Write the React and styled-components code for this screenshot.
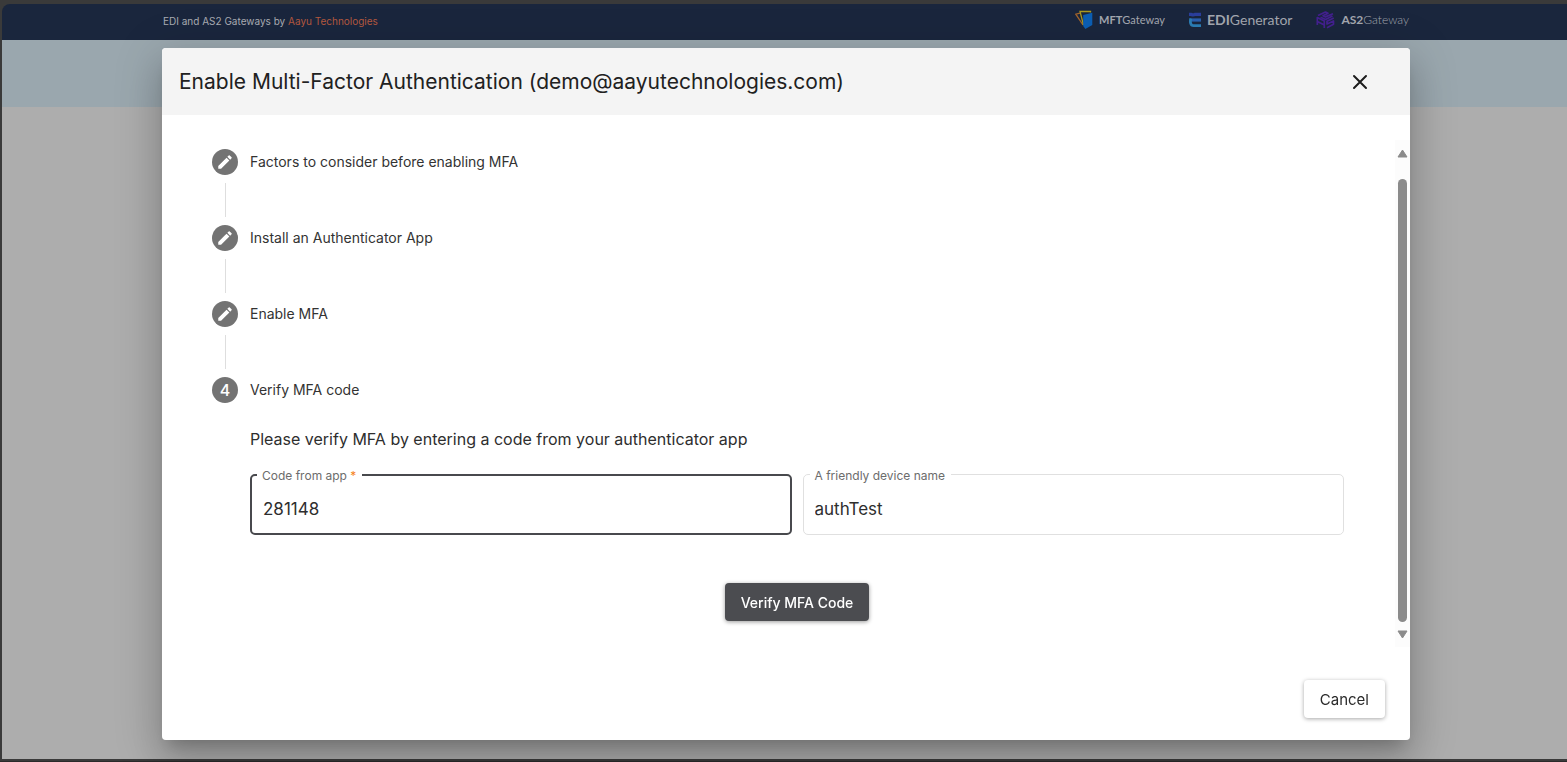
import React from 'react';
import styled, { createGlobalStyle, css } from 'styled-components';

const Global = createGlobalStyle`
  *, *::before, *::after { box-sizing: border-box; }
  html, body, #root { height: 100%; }
  body {
    margin: 0;
    background: #3a3a3a;
    font-family: Inter, "Liberation Sans", sans-serif;
    color: #2b2b2b;
  }
  button, input { font: inherit; color: inherit; }
  h1, h2, p, ol, fieldset { margin: 0; padding: 0; }
`;

const Page = styled.div`
  display: flex;
  flex-direction: column;
  min-height: 100%;
  padding: 4px 0 2px 2px;
  border-bottom: 1px solid #2a2a2a;
`;

const TopBar = styled.header`
  display: flex;
  align-items: center;
  justify-content: space-between;
  height: 36px;
  padding: 0 158px 2px 161px;
  border-top-left-radius: 8px;
  background: #1a263d;
`;

const Tagline = styled.p`
  font-size: 10px;
  line-height: 16px;
  color: #a9acb2;
`;

const BrandLink = styled.a`
  color: #b4583f;
  text-decoration: none;
`;

const Brands = styled.nav`
  display: flex;
  align-items: center;
  gap: 24px;
  padding-bottom: 2px;
`;

const Brand = styled.a`
  display: flex;
  align-items: center;
  gap: 6px;
  font-family: Lato, sans-serif;
  font-size: ${(p) => p.$size}px;
  line-height: 20px;
  color: #a3a7af;
  text-decoration: none;
  svg { display: block; }
  b { font-weight: 700; }
  span { font-weight: ${(p) => (p.$light ? 300 : 400)}; }
`;

const Banner = styled.div`
  height: 67px;
  background: #9aa7ae;
`;

const Canvas = styled.main`
  flex: 1;
  background: #adadad;
`;

const Overlay = styled.div`
  position: fixed;
  inset: 0;
  display: flex;
  padding: 48px 157px 22px 162px;
`;

const Shadow = styled.div`
  flex: 1;
  display: flex;
  min-width: 0;
  border-radius: 4px;
  box-shadow: 0 11px 15px -7px rgba(0, 0, 0, 0.2), 0 24px 38px 3px rgba(0, 0, 0, 0.14),
    0 9px 46px 8px rgba(0, 0, 0, 0.12);
`;

const Dialog = styled.section`
  flex: 1;
  min-width: 0;
  display: flex;
  flex-direction: column;
  overflow: hidden;
  border-radius: 4px;
  background: #fff;
`;

const DialogHeader = styled.header`
  display: flex;
  align-items: center;
  justify-content: space-between;
  height: 67px;
  padding: 0 39px 0 17px;
  background: #f4f4f4;
`;

const Title = styled.h1`
  font-size: 21px;
  line-height: 32px;
  font-weight: 400;
  color: #212121;
`;

const CloseButton = styled.button`
  display: grid;
  place-items: center;
  width: 22px;
  height: 24px;
  padding: 0;
  border: 0;
  background: none;
  color: #1c1c1c;
`;

const DialogBody = styled.div`
  flex: 1;
  min-height: 0;
  display: flex;
  margin-top: 25px;
`;

const Content = styled.div`
  flex: 1;
  min-width: 0;
  padding: 9px 51px 0 50px;
`;

const Steps = styled.ol`
  list-style: none;
`;

const Step = styled.li`
  display: flex;
  flex-direction: column;
`;

const StepHead = styled.div`
  display: flex;
  align-items: center;
  gap: 12px;
  height: 26px;
  font-size: 14px;
  line-height: 24px;
  color: #333;
`;

const Marker = styled.span`
  display: grid;
  place-items: center;
  flex: none;
  width: 26px;
  height: 26px;
  border-radius: 50%;
  background: #737373;
  color: #fff;
  font-size: 16px;
  font-weight: 500;
`;

const Connector = styled.div`
  width: 1px;
  height: 34px;
  margin: 8px 0 8px 13px;
  background: #dedede;
`;

const StepPanel = styled.form`
  display: flex;
  flex-direction: column;
  padding: 24px 0 0 38px;
`;

const Lead = styled.p`
  font-size: 16px;
  line-height: 24px;
  color: #2e2e2e;
`;

const Fields = styled.div`
  display: grid;
  grid-template-columns: 1fr 1fr;
  gap: 11px;
  margin-top: 13px;
`;

const Field = styled.fieldset`
  display: block;
  min-width: 0;
  height: 71px;
  border: 1px solid #e0e0e0;
  border-radius: 5px;
  ${(p) => p.$active && css`border: 2px solid #48494d;`}
`;

const Legend = styled.legend`
  margin-left: ${(p) => (p.$active ? 5 : 6)}px;
  padding: 3px 6px 0 5px;
  font-size: 12px;
  line-height: 18px;
  color: #6c6c6c;
  b { font-weight: 400; color: #f58220; }
`;

const Input = styled.input`
  display: block;
  width: 100%;
  height: 48px;
  padding: 0 11px;
  border: 0;
  outline: 0;
  background: none;
  font-size: 17px;
  color: #2e2e2e;
`;

const PrimaryButton = styled.button`
  align-self: center;
  height: 38px;
  margin-top: 48px;
  padding: 0 16px;
  border: 0;
  border-radius: 4px;
  background: #4b4c50;
  color: #fff;
  font-size: 14px;
  font-weight: 500;
  box-shadow: 0 1px 4px rgba(0, 0, 0, 0.4);
`;

const ScrollTrack = styled.div`
  display: flex;
  flex-direction: column;
  align-items: center;
  flex: none;
  width: 15px;
  padding: 9px 0 8px;
  background: #fcfcfc;
  svg { display: block; flex: none; }
`;

const ScrollThumb = styled.div`
  flex: 1;
  width: 9px;
  margin: 21px 0 8px;
  border-radius: 5px;
  background: #8b8b8b;
`;

const DialogFooter = styled.footer`
  display: flex;
  justify-content: flex-end;
  padding: 33px 25px 22px;
`;

const CancelButton = styled.button`
  height: 38px;
  padding: 0 16px;
  border: 0;
  border-radius: 4px;
  background: #fff;
  color: #2b2b2b;
  font-size: 15px;
  box-shadow: 0 1px 4px rgba(0, 0, 0, 0.35);
`;

const Pencil = () => (
  <svg width="18" height="18" viewBox="0 0 24 24" fill="currentColor" aria-hidden="true">
    <path d="M3 17.25V21h3.75L17.81 9.94l-3.75-3.75L3 17.25zM20.71 7.04a1 1 0 0 0 0-1.41l-2.34-2.34a1 1 0 0 0-1.41 0l-1.83 1.83 3.75 3.75 1.83-1.83z" />
  </svg>
);

const MftLogo = () => (
  <svg width="18" height="20" viewBox="0 0 18 20" fill="none" aria-hidden="true">
    <path d="M5 3.200.8 4.200 8 15" stroke="#a3642b" strokeWidth="1.3" />
    <path d="M15.500 2.500V1.500H5L8.500 15" stroke="#a99a22" strokeWidth="1.3" />
    <path d="M8.200 5 17.300 2.800V15L10.300 19 8.200 16z" fill="#0c5fb4" />
  </svg>
);

const EdiLogo = () => (
  <svg width="12" height="16" viewBox="0 0 12 16" fill="none" strokeWidth="3.200" aria-hidden="true">
    <path d="M0 2.300h1.500Q4 3.400 6 2.300h6" stroke="#2b3f9d" />
    <path d="M1 8H12" stroke="#2a5fae" />
    <path d="M1.800 6.500C.8 10 1.500 13.600 4.500 13.600H12" stroke="#2b7db4" strokeWidth="2.800" />
  </svg>
);

const As2Logo = () => (
  <svg width="19" height="18" viewBox="0 0 19 18" fill="none" stroke="#43208f" strokeWidth="1.700" strokeLinejoin="round" aria-hidden="true">
    <path d="M2 4.600 9.500 1l2.500 1.200-5 2.500 2.500 1.200L17 2.800M4.500 6.200 9.500 8.500l7-3.500" />
    <path d="M1.300 14V6.500l7 3.500v7M1.300 10.500l7 3.500" />
    <path d="M17.700 7 11 10.300v2.700l6.500-3v3.200L11 16.700" />
  </svg>
);

const CloseIcon = () => (
  <svg width="16" height="16" viewBox="0 0 16 16" stroke="currentColor" strokeWidth="2" strokeLinecap="round" aria-hidden="true">
    <path d="M2 2l12 12M14 2 2 14" />
  </svg>
);

const ArrowUp = () => (
  <svg width="11" height="9" viewBox="0 0 11 9" fill="#8b8b8b" stroke="#8b8b8b" strokeLinejoin="round">
    <path d="M5.500 1 10 8H1z" />
  </svg>
);

const ArrowDown = () => (
  <svg width="11" height="9" viewBox="0 0 11 9" fill="#8b8b8b" stroke="#8b8b8b" strokeLinejoin="round">
    <path d="M5.500 8 10 1H1z" />
  </svg>
);

const doneSteps = ['Factors to consider before enabling MFA', 'Install an Authenticator App', 'Enable MFA'];

export default function App() {
  return (
    <>
      <Global />
      <Page>
        <TopBar>
          <Tagline>
            EDI and AS2 Gateways by <BrandLink href="#aayu">Aayu Technologies</BrandLink>
          </Tagline>
          <Brands>
            <Brand href="#mft" $size={11}><MftLogo /><span><b>MFT</b>Gateway</span></Brand>
            <Brand href="#edi" $size={14}><EdiLogo /><span><b>EDI</b>Generator</span></Brand>
            <Brand href="#as2" $size={12} $light><As2Logo /><span><b>AS2</b>Gateway</span></Brand>
          </Brands>
        </TopBar>
        <Banner />
        <Canvas />
      </Page>
      <Overlay>
        <Shadow>
          <Dialog role="dialog" aria-labelledby="mfa-title">
            <DialogHeader>
              <Title id="mfa-title">Enable Multi-Factor Authentication (demo@aayutechnologies.com)</Title>
              <CloseButton type="button" aria-label="Close"><CloseIcon /></CloseButton>
            </DialogHeader>
            <DialogBody>
              <Content>
                <Steps>
                  {doneSteps.map((label) => (
                    <Step key={label}>
                      <StepHead><Marker><Pencil /></Marker>{label}</StepHead>
                      <Connector />
                    </Step>
                  ))}
                  <Step>
                    <StepHead><Marker>4</Marker>Verify MFA code</StepHead>
                    <StepPanel>
                      <Lead>Please verify MFA by entering a code from your authenticator app</Lead>
                      <Fields>
                        <Field $active>
                          <Legend $active><label htmlFor="code">Code from app <b>*</b></label></Legend>
                          <Input id="code" defaultValue="281148" />
                        </Field>
                        <Field>
                          <Legend><label htmlFor="device">A friendly device name</label></Legend>
                          <Input id="device" defaultValue="authTest" />
                        </Field>
                      </Fields>
                      <PrimaryButton type="button">Verify MFA Code</PrimaryButton>
                    </StepPanel>
                  </Step>
                </Steps>
              </Content>
              <ScrollTrack aria-hidden="true">
                <ArrowUp />
                <ScrollThumb />
                <ArrowDown />
              </ScrollTrack>
            </DialogBody>
            <DialogFooter>
              <CancelButton type="button">Cancel</CancelButton>
            </DialogFooter>
          </Dialog>
        </Shadow>
      </Overlay>
    </>
  );
}
